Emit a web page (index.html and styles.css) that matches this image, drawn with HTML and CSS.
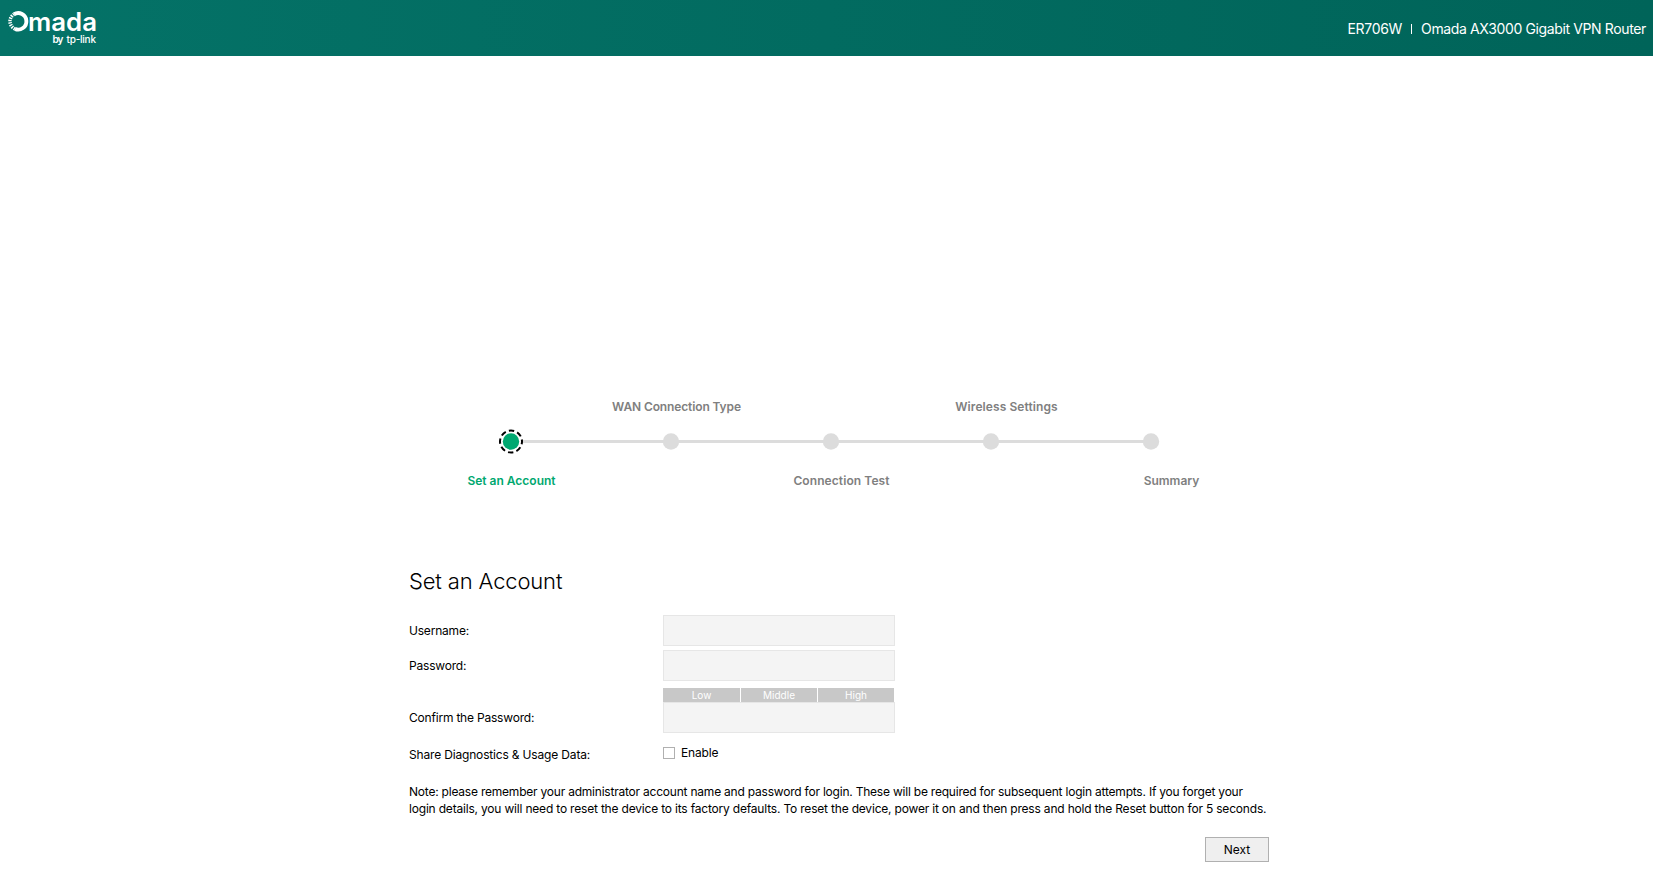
FILE: index.html
```html
<!DOCTYPE html>
<html lang="en">
<head>
<meta charset="utf-8">
<title>Omada AX3000 Gigabit VPN Router</title>
<link rel="stylesheet" href="styles.css">
</head>
<body>
<header class="header">
  <svg class="logo" width="100" height="56" viewBox="0 0 100 56" role="img" aria-label="Omada by tp-link">
    <path d="M14 14.3A8.2 8.2 0 1 1 15 28.9" fill="none" stroke="#fff" stroke-width="3.9"/>
    <path d="M15 28.9A8.2 8.2 0 0 1 14 14.3" fill="none" stroke="#fff" stroke-width="3.5" stroke-dasharray="1.4 1"/>
    <text class="logo-name" x="28" y="31" textLength="69" lengthAdjust="spacingAndGlyphs">mada</text>
    <text class="logo-by" x="52.5" y="43" textLength="11">by</text>
    <text class="logo-brand" x="66.5" y="43" textLength="29.5">tp-link</text>
  </svg>
  <div class="device"><span class="model">ER706W</span><span class="divider"></span><span class="product">Omada AX3000 Gigabit VPN Router</span></div>
</header>
<main class="wizard">
  <nav class="steps">
    <div class="step-labels">
      <span></span><span class="wan">WAN Connection Type</span><span></span><span class="wireless">Wireless Settings</span><span></span>
    </div>
    <svg class="track" width="664" height="26" viewBox="0 0 664 26">
      <rect x="24" y="11" width="628" height="3" fill="#dcdcdc"/>
      <circle cx="12" cy="12.5" r="11" fill="#fff" stroke="#000" stroke-width="2" stroke-dasharray="5.4 3.24" stroke-dashoffset="2.5"/>
      <circle cx="12" cy="12.5" r="8.2" fill="#00a870"/>
      <g fill="#dcdcdc"><circle cx="172" cy="12.5" r="8.2"/><circle cx="332" cy="12.5" r="8.2"/><circle cx="492" cy="12.5" r="8.2"/><circle cx="652" cy="12.5" r="8.2"/></g>
    </svg>
    <div class="step-labels">
      <span class="active">Set an Account</span><span></span><span class="test">Connection Test</span><span></span><span class="summary">Summary</span>
    </div>
  </nav>
  <form class="account">
    <h1 class="title">Set an Account</h1>
    <div class="row"><label class="label" for="user">Username:</label><input class="field" id="user" type="text"></div>
    <div class="row"><label class="label" for="pass">Password:</label><input class="field" id="pass" type="password"></div>
    <div class="strength"><span>Low</span><span>Middle</span><span>High</span></div>
    <div class="row"><label class="label" for="confirm">Confirm the Password:</label><input class="field" id="confirm" type="password"></div>
    <div class="row row-share"><span class="label label-share">Share Diagnostics &amp; Usage Data:</span><label class="check"><input class="box" type="checkbox"><span>Enable</span></label></div>
    <p class="note"><span class="line1">Note: please remember your administrator account name and password for login. These will be required for subsequent login attempts. If you forget your</span><br><span class="line2">login details, you will need to reset the device to its factory defaults. To reset the device, power it on and then press and hold the Reset button for 5 seconds.</span></p>
    <div class="actions"><button class="next" type="button">Next</button></div>
  </form>
</main>
</body>
</html>
```
FILE: styles.css
```css
* { box-sizing: border-box; }
body {
  margin: 0;
  height: 896px;
  overflow: hidden;
  background: #fff;
  color: #000;
  font-family: Inter, "Liberation Sans", sans-serif;
  font-size: 12px;
}
.header {
  display: flex;
  justify-content: space-between;
  height: 56px;
  padding-right: 7px;
  color: #fff;
  background: linear-gradient(90deg, #047267, #006459);
}
.logo { fill: #fff; }
.logo-name { font-size: 25px; font-weight: 600; }
.logo-by { font-size: 10px; font-weight: 600; }
.logo-brand { font-size: 10px; font-weight: 500; }
.device {
  display: flex;
  align-items: center;
  padding-bottom: 0;
  font-size: 14px;
  white-space: nowrap;
}
.model { letter-spacing: -0.3px; }
.product { letter-spacing: -0.37px; }
.divider { width: 1px; height: 10px; margin: 1px 9px 0; background: #fff; }
.wizard { width: 860px; margin-left: 409px; padding-top: 341px; }
.steps { display: flex; flex-direction: column; margin-left: 20px; }
.step-labels {
  display: grid;
  grid-template-columns: repeat(5, 165px);
  height: 20px;
  line-height: 20px;
  color: #808080;
  font-weight: 600;
  text-align: center;
  white-space: nowrap;
}
.step-labels .active { color: #00a870; }
.step-labels .wan { letter-spacing: -0.12px; }
.step-labels .wireless { letter-spacing: 0.09px; }
.step-labels .test { letter-spacing: 0.09px; }
.track { margin: 12px 0 16px 70px; }
.title {
  height: 30px;
  margin: 75px 0 19px;
  font-size: 22px;
  line-height: 30px;
  font-weight: 300;
  letter-spacing: -0.15px;
}
.row { display: flex; height: 31px; margin-bottom: 4px; }
.label { width: 254px; line-height: 31px; letter-spacing: -0.2px; }
.label-share { letter-spacing: -0.17px; }
.field {
  width: 232px;
  height: 31px;
  padding: 0 6px;
  border: 1px solid #e6e6e6;
  border-radius: 0;
  background: #f4f4f4;
}
.strength {
  display: grid;
  grid-template-columns: 77px 76px 76px;
  gap: 1px;
  height: 14px;
  margin: 7px 0 0 254px;
  color: #fff;
  font-size: 10px;
  line-height: 14px;
  text-align: center;
}
.strength span { background: #c8c8c8; }
.row-share { margin-top: 6px; }
.check { display: flex; height: 27px; align-items: center; gap: 6px; letter-spacing: -0.15px; }
.box {
  width: 12px;
  height: 12px;
  margin: 0;
  border: 1px solid #b0b0b0;
  background: #fff;
  appearance: none;
}
.note { margin: 13px 0 20px; line-height: 17px; white-space: nowrap; }
.line1 { letter-spacing: -0.215px; }
.line2 { letter-spacing: -0.19px; }
.actions { display: flex; justify-content: flex-end; }
.next {
  width: 64px;
  height: 25px;
  padding: 0;
  border: 1px solid #b0b0b0;
  background: #efefef;
  color: #000;
  font: 12px Inter, sans-serif;
}
```
